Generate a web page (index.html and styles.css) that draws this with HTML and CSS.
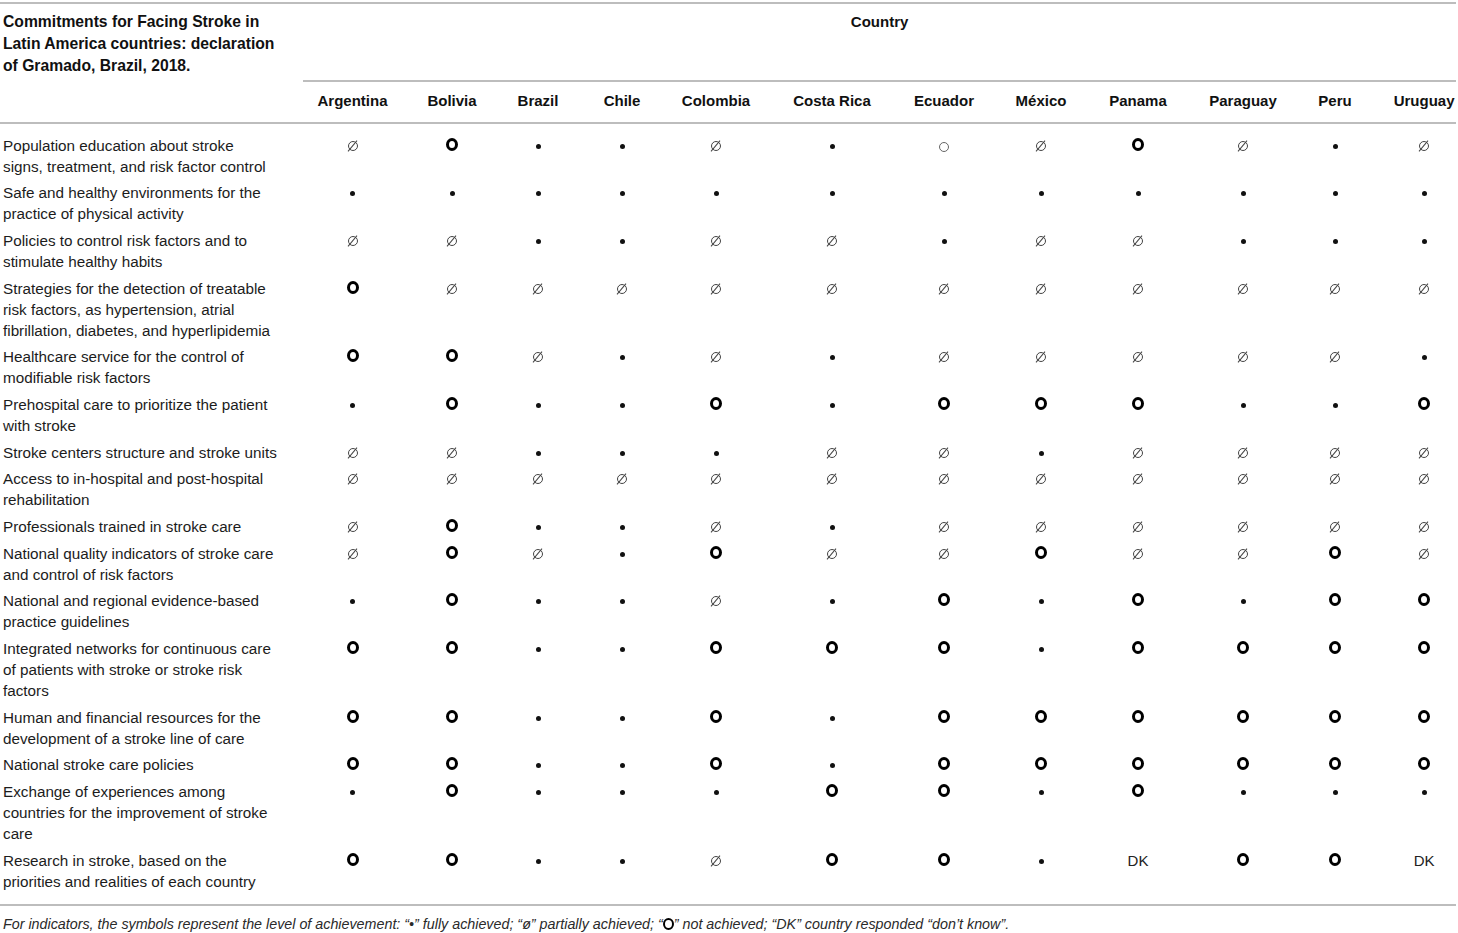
FILE: index.html
```html
<!DOCTYPE html>
<html lang="en">
<head>
<meta charset="utf-8">
<title>Commitments for Facing Stroke in Latin America</title>
<link rel="stylesheet" href="styles.css">
</head>
<body>
<table class="tbl">
  <colgroup>
    <col class="c-label">
    <col class="c-arg"><col class="c-bol"><col class="c-bra"><col class="c-chi"><col class="c-col"><col class="c-cr">
    <col class="c-ecu"><col class="c-mex"><col class="c-pan"><col class="c-par"><col class="c-per"><col class="c-uru">
  </colgroup>
  <thead>
    <tr>
      <th class="th-title" rowspan="2">Commitments for Facing Stroke in<br>Latin America countries: declaration<br>of Gramado, Brazil, 2018.</th>
      <th class="th-country" colspan="12">Country</th>
    </tr>
    <tr>
      <th class="th-name">Argentina</th>
      <th class="th-name">Bolivia</th>
      <th class="th-name">Brazil</th>
      <th class="th-name">Chile</th>
      <th class="th-name">Colombia</th>
      <th class="th-name">Costa Rica</th>
      <th class="th-name">Ecuador</th>
      <th class="th-name">México</th>
      <th class="th-name">Panama</th>
      <th class="th-name">Paraguay</th>
      <th class="th-name">Peru</th>
      <th class="th-name">Uruguay</th>
    </tr>
  </thead>
  <tbody>
    <tr>
      <td class="lbl">Population education about stroke<br>signs, treatment, and risk factor control</td>
      <td><i class="s p"></i></td><td><i class="s n"></i></td><td><i class="s f"></i></td><td><i class="s f"></i></td><td><i class="s p"></i></td><td><i class="s f"></i></td>
      <td><i class="s o"></i></td><td><i class="s p"></i></td><td><i class="s n"></i></td><td><i class="s p"></i></td><td><i class="s f"></i></td><td><i class="s p"></i></td>
    </tr>
    <tr>
      <td class="lbl">Safe and healthy environments for the<br>practice of physical activity</td>
      <td><i class="s f"></i></td><td><i class="s f"></i></td><td><i class="s f"></i></td><td><i class="s f"></i></td><td><i class="s f"></i></td><td><i class="s f"></i></td>
      <td><i class="s f"></i></td><td><i class="s f"></i></td><td><i class="s f"></i></td><td><i class="s f"></i></td><td><i class="s f"></i></td><td><i class="s f"></i></td>
    </tr>
    <tr>
      <td class="lbl">Policies to control risk factors and to<br>stimulate healthy habits</td>
      <td><i class="s p"></i></td><td><i class="s p"></i></td><td><i class="s f"></i></td><td><i class="s f"></i></td><td><i class="s p"></i></td><td><i class="s p"></i></td>
      <td><i class="s f"></i></td><td><i class="s p"></i></td><td><i class="s p"></i></td><td><i class="s f"></i></td><td><i class="s f"></i></td><td><i class="s f"></i></td>
    </tr>
    <tr>
      <td class="lbl">Strategies for the detection of treatable<br>risk factors, as hypertension, atrial<br>fibrillation, diabetes, and hyperlipidemia</td>
      <td><i class="s n"></i></td><td><i class="s p"></i></td><td><i class="s p"></i></td><td><i class="s p"></i></td><td><i class="s p"></i></td><td><i class="s p"></i></td>
      <td><i class="s p"></i></td><td><i class="s p"></i></td><td><i class="s p"></i></td><td><i class="s p"></i></td><td><i class="s p"></i></td><td><i class="s p"></i></td>
    </tr>
    <tr>
      <td class="lbl">Healthcare service for the control of<br>modifiable risk factors</td>
      <td><i class="s n"></i></td><td><i class="s n"></i></td><td><i class="s p"></i></td><td><i class="s f"></i></td><td><i class="s p"></i></td><td><i class="s f"></i></td>
      <td><i class="s p"></i></td><td><i class="s p"></i></td><td><i class="s p"></i></td><td><i class="s p"></i></td><td><i class="s p"></i></td><td><i class="s f"></i></td>
    </tr>
    <tr>
      <td class="lbl">Prehospital care to prioritize the patient<br>with stroke</td>
      <td><i class="s f"></i></td><td><i class="s n"></i></td><td><i class="s f"></i></td><td><i class="s f"></i></td><td><i class="s n"></i></td><td><i class="s f"></i></td>
      <td><i class="s n"></i></td><td><i class="s n"></i></td><td><i class="s n"></i></td><td><i class="s f"></i></td><td><i class="s f"></i></td><td><i class="s n"></i></td>
    </tr>
    <tr>
      <td class="lbl">Stroke centers structure and stroke units</td>
      <td><i class="s p"></i></td><td><i class="s p"></i></td><td><i class="s f"></i></td><td><i class="s f"></i></td><td><i class="s f"></i></td><td><i class="s p"></i></td>
      <td><i class="s p"></i></td><td><i class="s f"></i></td><td><i class="s p"></i></td><td><i class="s p"></i></td><td><i class="s p"></i></td><td><i class="s p"></i></td>
    </tr>
    <tr>
      <td class="lbl">Access to in-hospital and post-hospital<br>rehabilitation</td>
      <td><i class="s p"></i></td><td><i class="s p"></i></td><td><i class="s p"></i></td><td><i class="s p"></i></td><td><i class="s p"></i></td><td><i class="s p"></i></td>
      <td><i class="s p"></i></td><td><i class="s p"></i></td><td><i class="s p"></i></td><td><i class="s p"></i></td><td><i class="s p"></i></td><td><i class="s p"></i></td>
    </tr>
    <tr>
      <td class="lbl">Professionals trained in stroke care</td>
      <td><i class="s p"></i></td><td><i class="s n"></i></td><td><i class="s f"></i></td><td><i class="s f"></i></td><td><i class="s p"></i></td><td><i class="s f"></i></td>
      <td><i class="s p"></i></td><td><i class="s p"></i></td><td><i class="s p"></i></td><td><i class="s p"></i></td><td><i class="s p"></i></td><td><i class="s p"></i></td>
    </tr>
    <tr>
      <td class="lbl">National quality indicators of stroke care<br>and control of risk factors</td>
      <td><i class="s p"></i></td><td><i class="s n"></i></td><td><i class="s p"></i></td><td><i class="s f"></i></td><td><i class="s n"></i></td><td><i class="s p"></i></td>
      <td><i class="s p"></i></td><td><i class="s n"></i></td><td><i class="s p"></i></td><td><i class="s p"></i></td><td><i class="s n"></i></td><td><i class="s p"></i></td>
    </tr>
    <tr>
      <td class="lbl">National and regional evidence-based<br>practice guidelines</td>
      <td><i class="s f"></i></td><td><i class="s n"></i></td><td><i class="s f"></i></td><td><i class="s f"></i></td><td><i class="s p"></i></td><td><i class="s f"></i></td>
      <td><i class="s n"></i></td><td><i class="s f"></i></td><td><i class="s n"></i></td><td><i class="s f"></i></td><td><i class="s n"></i></td><td><i class="s n"></i></td>
    </tr>
    <tr>
      <td class="lbl">Integrated networks for continuous care<br>of patients with stroke or stroke risk<br>factors</td>
      <td><i class="s n"></i></td><td><i class="s n"></i></td><td><i class="s f"></i></td><td><i class="s f"></i></td><td><i class="s n"></i></td><td><i class="s n"></i></td>
      <td><i class="s n"></i></td><td><i class="s f"></i></td><td><i class="s n"></i></td><td><i class="s n"></i></td><td><i class="s n"></i></td><td><i class="s n"></i></td>
    </tr>
    <tr>
      <td class="lbl">Human and financial resources for the<br>development of a stroke line of care</td>
      <td><i class="s n"></i></td><td><i class="s n"></i></td><td><i class="s f"></i></td><td><i class="s f"></i></td><td><i class="s n"></i></td><td><i class="s f"></i></td>
      <td><i class="s n"></i></td><td><i class="s n"></i></td><td><i class="s n"></i></td><td><i class="s n"></i></td><td><i class="s n"></i></td><td><i class="s n"></i></td>
    </tr>
    <tr>
      <td class="lbl">National stroke care policies</td>
      <td><i class="s n"></i></td><td><i class="s n"></i></td><td><i class="s f"></i></td><td><i class="s f"></i></td><td><i class="s n"></i></td><td><i class="s f"></i></td>
      <td><i class="s n"></i></td><td><i class="s n"></i></td><td><i class="s n"></i></td><td><i class="s n"></i></td><td><i class="s n"></i></td><td><i class="s n"></i></td>
    </tr>
    <tr>
      <td class="lbl">Exchange of experiences among<br>countries for the improvement of stroke<br>care</td>
      <td><i class="s f"></i></td><td><i class="s n"></i></td><td><i class="s f"></i></td><td><i class="s f"></i></td><td><i class="s f"></i></td><td><i class="s n"></i></td>
      <td><i class="s n"></i></td><td><i class="s f"></i></td><td><i class="s n"></i></td><td><i class="s f"></i></td><td><i class="s f"></i></td><td><i class="s f"></i></td>
    </tr>
    <tr>
      <td class="lbl">Research in stroke, based on the<br>priorities and realities of each country</td>
      <td><i class="s n"></i></td><td><i class="s n"></i></td><td><i class="s f"></i></td><td><i class="s f"></i></td><td><i class="s p"></i></td><td><i class="s n"></i></td>
      <td><i class="s n"></i></td><td><i class="s f"></i></td><td class="dk">DK</td><td><i class="s n"></i></td><td><i class="s n"></i></td><td class="dk">DK</td>
    </tr>
  </tbody>
</table>
<p class="note">For indicators, the symbols represent the level of achievement: “•” fully achieved; “ø” partially achieved; “<span class="ring-sm"></span>” not achieved; “DK” country responded “don’t know”.</p>
</body>
</html>
```

FILE: styles.css
```css
html, body {
  margin: 0;
  padding: 0;
  background: #ffffff;
}

body {
  font-family: "Liberation Sans", Arial, sans-serif;
  font-size: 15px;
  color: #1c1c1c;
  overflow: hidden;
}

.tbl {
  border-collapse: collapse;
  table-layout: fixed;
  width: 1456px;
  margin-top: 2px;
  border-top: 2px solid #bdbdbd;
  border-bottom: 2px solid #bdbdbd;
}

.c-label { width: 303px; }
.c-arg { width: 99px; }
.c-bol { width: 100px; }
.c-bra { width: 72px; }
.c-chi { width: 96px; }
.c-col { width: 92px; }
.c-cr { width: 140px; }
.c-ecu { width: 84px; }
.c-mex { width: 110px; }
.c-pan { width: 84px; }
.c-par { width: 126px; }
.c-per { width: 58px; }
.c-uru { width: 92px; }

th {
  font-weight: bold;
  line-height: 22px;
  text-align: center;
  vertical-align: top;
  padding: 0;
  color: #111;
  white-space: nowrap;
}

.th-title {
  text-align: left;
  font-size: 15.7px;
  padding: 7px 0 0 3px;
  border-bottom: 2px solid #bdbdbd;
}

.th-country {
  height: 22px;
  padding: 7px 0 47px;
  border-bottom: 2px solid #bdbdbd;
}

.th-name {
  padding: 8px 0 10px;
  border-bottom: 2px solid #bdbdbd;
}

td {
  line-height: 21px;
  padding: 2.85px 0;
  vertical-align: top;
  text-align: center;
  white-space: nowrap;
}

td.lbl {
  text-align: left;
  font-size: 15.25px;
  padding-left: 3px;
}

tr > th.th-name:last-child,
tr > td:last-child {
  padding-left: 28px;
}

tbody tr:first-child td {
  padding-top: 10.5px;
}

tbody tr:last-child td {
  padding-bottom: 12px;
}

.dk {
  color: #222;
}

/* Achievement symbols */
.s {
  display: inline-block;
  vertical-align: top;
  font-style: normal;
  box-sizing: border-box;
}

.f {
  width: 5px;
  height: 5px;
  margin-top: 9px;
  border-radius: 50%;
  background: #111;
}

.n {
  width: 12px;
  height: 13px;
  margin-top: 3px;
  border: 3px solid #000;
  border-radius: 50%;
}

.o {
  width: 10px;
  height: 10px;
  margin-top: 7px;
  border: 1px solid #666;
  border-radius: 50%;
}

.p {
  position: relative;
  width: 10px;
  height: 10px;
  margin-top: 6px;
  border: 1.2px solid #444;
  border-radius: 50%;
}

.p::after {
  content: "";
  position: absolute;
  left: 3.2px;
  top: -3px;
  width: 1.1px;
  height: 14px;
  background: #444;
  transform: rotate(40deg);
}

.note {
  margin: 0;
  padding: 8px 0 0 3px;
  font-size: 14.3px;
  line-height: 20px;
  font-style: italic;
  color: #2a2a2a;
  white-space: nowrap;
}

.ring-sm {
  display: inline-block;
  box-sizing: border-box;
  width: 11px;
  height: 12px;
  border: 2.6px solid #000;
  border-radius: 50%;
  vertical-align: -1px;
}
```
